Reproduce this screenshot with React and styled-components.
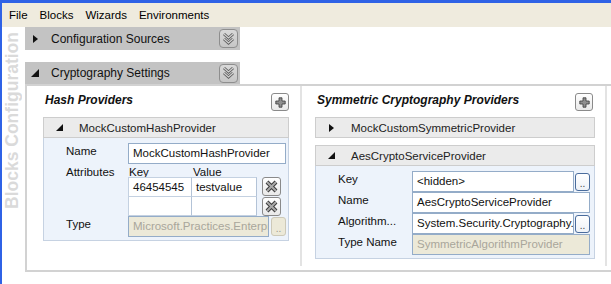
import React from "react";
import styled, { createGlobalStyle } from "styled-components";

const GlobalStyle = createGlobalStyle`
  html, body {
    margin: 0;
    padding: 0;
    background: #fff;
    overflow: hidden;
  }
  body {
    font-family: "Liberation Sans", Arial, sans-serif;
    font-size: 11.5px;
    color: #111;
  }
`;

const Window = styled.div`
  width: 611px;
  height: 284px;
  box-sizing: border-box;
  border-top: 3px solid #2f62e6;
  border-left: 2px solid #2f62e6;
  display: flex;
  flex-direction: column;
  overflow: hidden;
`;

const MenuBar = styled.div`
  height: 24px;
  flex: none;
  background: #efebde;
  display: flex;
  align-items: center;
  padding-left: 1px;
`;

const MenuItem = styled.span`
  padding: 0 6px;
  font-size: 11.5px;
  color: #000;
`;

const Body = styled.div`
  flex: 1;
  display: flex;
  min-height: 0;
`;

const SideBar = styled.div`
  width: 23px;
  flex: none;
  padding-top: 5px;
`;

const SideTitle = styled.div`
  display: inline-block;
  writing-mode: vertical-rl;
  transform: rotate(180deg);
  font-size: 17.5px;
  font-weight: bold;
  line-height: 20px;
  color: #dadada;
  white-space: nowrap;
`;

const Content = styled.div`
  flex: 1;
  min-width: 0;
  display: flex;
  flex-direction: column;
`;

const SectionHeader = styled.div`
  width: 215px;
  height: ${p => p.$height}px;
  flex: none;
  box-sizing: border-box;
  margin-top: ${p => p.$top || 0}px;
  padding: 0 2px 0 5px;
  background: #c3c3c3;
  display: flex;
  align-items: center;
  font-size: 12px;
  color: #111;
`;

const Toggle = styled.span`
  width: 10px;
  height: 10px;
  flex: none;
  display: flex;
  align-items: center;
  justify-content: center;
  margin-right: ${p => p.$gap}px;

  &::before {
    content: "";
    display: block;
    ${p =>
      p.$open
        ? `border-left: ${p.$size}px solid transparent;
           border-bottom: ${p.$size}px solid #111;`
        : `border-left: 5px solid #111;
           border-top: 4.5px solid transparent;
           border-bottom: 4.5px solid transparent;`}
  }
`;

const ChevronButton = styled.span`
  margin-left: auto;
  width: 19px;
  height: 19px;
  box-sizing: border-box;
  border: 1px solid #8e8e8e;
  border-radius: 4px;
  background: linear-gradient(#d9d9d9, #c6c6c6);
  display: flex;
  align-items: center;
  justify-content: center;
`;

const Panel = styled.div`
  height: 188px;
  box-sizing: border-box;
  border: 2px solid #d2d2d2;
  border-right: none;
  display: grid;
  grid-template-columns: 275px 305px;
  align-items: start;
`;

const Column = styled.div`
  height: 180px;
  box-sizing: border-box;
  padding: 7px ${p => p.$pr}px 0 ${p => p.$pl}px;
  border-right: 2px solid #e3e3e3;
`;

const ColumnHead = styled.div`
  height: 18px;
  margin-bottom: 6px;
  display: flex;
  justify-content: space-between;
  align-items: flex-start;
`;

const ColumnTitle = styled.div`
  margin: -1px 0 0 2px;
  font-size: 12px;
  line-height: 16px;
  font-weight: bold;
  font-style: italic;
  color: #111;
`;

const IconButton = styled.span`
  width: ${p => p.$size}px;
  height: ${p => p.$size}px;
  box-sizing: border-box;
  flex: none;
  margin: ${p => p.$margin || 0};
  border: 1px solid #8a8a8a;
  border-radius: 3px;
  background: linear-gradient(#ffffff, #e9e9e9);
  display: flex;
  align-items: center;
  justify-content: center;
`;

const Card = styled.div`
  margin-top: ${p => p.$top || 0}px;
`;

const CardHeader = styled.div`
  height: 21px;
  box-sizing: border-box;
  border: 1px solid #cdcdcd;
  background: #ebebeb;
  padding-left: 10px;
  display: flex;
  align-items: center;
  font-size: 11.5px;
  color: #222;
`;

const CardBody = styled.div`
  border: 1px solid #c6d2e2;
  border-top: none;
  background: #edf3fb;
  padding: 5px ${p => p.$pr}px ${p => p.$pb}px 0;
  display: grid;
  grid-template-columns: ${p => p.$label}px 1fr;
  grid-auto-rows: ${p => p.$row};
`;

const Label = styled.div`
  padding: 1px 0 0 22px;
  line-height: 14px;
  font-size: 11.5px;
  color: #111;
  white-space: nowrap;
`;

const FieldRow = styled.div`
  display: flex;
  align-items: center;
  min-width: 0;
`;

const Field = styled.div`
  flex: 1;
  min-width: 0;
  height: 21px;
  box-sizing: border-box;
  border: 1px solid #94acc8;
  background: ${p => (p.$disabled ? "#ece9d8" : "#fff")};
  color: ${p => (p.$disabled ? "#a9a69b" : "#111")};
  padding: 0 4px;
  line-height: 19px;
  font-size: 11.5px;
  white-space: nowrap;
  overflow: hidden;
`;

const DotsButton = styled.span`
  width: 15px;
  height: ${p => p.$h}px;
  flex: none;
  box-sizing: border-box;
  margin-left: ${p => p.$gap}px;
  border: 1px solid ${p => (p.$disabled ? "#cdc9b8" : "#4a6c9c")};
  border-radius: 3px;
  background: ${p =>
    p.$disabled ? "#ece9d8" : "linear-gradient(#ffffff, #eef2f7)"};
  display: flex;
  align-items: flex-end;
  justify-content: center;
  padding-bottom: 1px;
  font-size: 10px;
  line-height: 10px;
  color: ${p => (p.$disabled ? "#9a978c" : "#444")};
`;

const AttrTable = styled.div`
  display: grid;
  grid-template-columns: 64px 65px 24px;
  grid-template-rows: 13px 20px 19px;
  padding-bottom: 0;
`;

const AttrHead = styled.div`
  padding: 1px 0 0 1px;
  line-height: 14px;
  font-size: 11.5px;
  color: #111;
`;

const AttrCell = styled.div`
  box-sizing: border-box;
  background: #fff;
  border-right: 1px solid #b3c3d7;
  border-bottom: 1px solid #c4d1e1;
  border-left: ${p => (p.$first ? "1px solid #c4d1e1" : "none")};
  border-top: ${p => (p.$top ? "1px solid #c4d1e1" : "none")};
  padding-left: 4px;
  line-height: 18px;
  font-size: 11.5px;
  color: #111;
`;

const ChevronIcon = () => (
  <svg width="13" height="14" viewBox="0 0 13 14">
    <g fill="none">
      <path d="M2 2l4.5 4 4.5-4M2 7l4.5 4 4.5-4" stroke="#5c5c5c" strokeWidth="3" />
      <path d="M2 2l4.5 4 4.5-4M2 7l4.5 4 4.5-4" stroke="#d2d2d2" strokeWidth="1.2" />
    </g>
  </svg>
);

const PlusIcon = () => (
  <svg width="11" height="11" viewBox="0 0 11 11">
    <path
      d="M4 0.8h3v3.2h3.2v3H7v3.2H4V7H0.8V4H4z"
      fill="#8f8f8f"
      stroke="#3a3a3a"
      strokeWidth="0.8"
    />
  </svg>
);

const CrossIcon = () => (
  <svg width="13" height="13" viewBox="0 0 13 13">
    <path d="M2 2L11 11M11 2L2 11" stroke="#3c3c3c" strokeWidth="4" />
    <path d="M2 2L11 11M11 2L2 11" stroke="#a9a9a9" strokeWidth="2" />
  </svg>
);

const DeleteButton = ({ row }) => (
  <IconButton
    $size={19}
    $margin="0 0 0 5px"
    style={{ gridColumn: 3, gridRow: row }}
  >
    <CrossIcon />
  </IconButton>
);

export default function App() {
  return (
    <>
      <GlobalStyle />
      <Window>
        <MenuBar>
          {["File", "Blocks", "Wizards", "Environments"].map(m => (
            <MenuItem key={m}>{m}</MenuItem>
          ))}
        </MenuBar>
        <Body>
          <SideBar>
            <SideTitle>Blocks Configuration</SideTitle>
          </SideBar>
          <Content>
            <SectionHeader $height={23}>
              <Toggle $gap={11} />
              Configuration Sources
              <ChevronButton>
                <ChevronIcon />
              </ChevronButton>
            </SectionHeader>
            <SectionHeader $height={22} $top={12}>
              <Toggle $open $size={8} $gap={11} />
              Cryptography Settings
              <ChevronButton>
                <ChevronIcon />
              </ChevronButton>
            </SectionHeader>
            <Panel>
              <Column $pl={16} $pr={11}>
                <ColumnHead>
                  <ColumnTitle>Hash Providers</ColumnTitle>
                  <IconButton $size={18} $margin="0 0 0 0">
                    <PlusIcon />
                  </IconButton>
                </ColumnHead>
                <Card>
                  <CardHeader>
                    <Toggle $open $size={7} $gap={15} />
                    MockCustomHashProvider
                  </CardHeader>
                  <CardBody $label={84} $pr={2} $pb={3} $row="auto">
                    <Label>Name</Label>
                    <FieldRow>
                      <Field>MockCustomHashProvider</Field>
                    </FieldRow>
                    <Label>Attributes</Label>
                    <AttrTable>
                      <AttrHead>Key</AttrHead>
                      <AttrHead>Value</AttrHead>
                      <span />
                      <AttrCell $first $top>46454545</AttrCell>
                      <AttrCell $top>testvalue</AttrCell>
                      <DeleteButton row={2} />
                      <AttrCell $first />
                      <AttrCell />
                      <DeleteButton row={3} />
                    </AttrTable>
                    <Label>Type</Label>
                    <FieldRow>
                      <Field $disabled>
                        Microsoft.Practices.EnterpriseLibrary.Security.Cryptography
                      </Field>
                      <DotsButton $disabled $h={19} $gap={2}>
                        ..
                      </DotsButton>
                    </FieldRow>
                  </CardBody>
                </Card>
              </Column>

              <Column $pl={13} $pr={10}>
                <ColumnHead>
                  <ColumnTitle>Symmetric Cryptography Providers</ColumnTitle>
                  <IconButton $size={18} $margin="0 2px 0 0">
                    <PlusIcon />
                  </IconButton>
                </ColumnHead>
                <Card>
                  <CardHeader>
                    <Toggle $gap={15} />
                    MockCustomSymmetricProvider
                  </CardHeader>
                </Card>
                <Card $top={7}>
                  <CardHeader>
                    <Toggle $open $size={7} $gap={15} />
                    AesCryptoServiceProvider
                  </CardHeader>
                  <CardBody $label={96} $pr={4} $pb={3} $row="21px">
                    <Label>Key</Label>
                    <FieldRow>
                      <Field>&lt;hidden&gt;</Field>
                      <DotsButton $h={18} $gap={1}>..</DotsButton>
                    </FieldRow>
                    <Label>Name</Label>
                    <FieldRow>
                      <Field>AesCryptoServiceProvider</Field>
                    </FieldRow>
                    <Label>Algorithm...</Label>
                    <FieldRow>
                      <Field>System.Security.Cryptography.AesCryptoServiceProvider</Field>
                      <DotsButton $h={18} $gap={1}>..</DotsButton>
                    </FieldRow>
                    <Label>Type Name</Label>
                    <FieldRow>
                      <Field $disabled>SymmetricAlgorithmProvider</Field>
                    </FieldRow>
                  </CardBody>
                </Card>
              </Column>
            </Panel>
          </Content>
        </Body>
      </Window>
    </>
  );
}
